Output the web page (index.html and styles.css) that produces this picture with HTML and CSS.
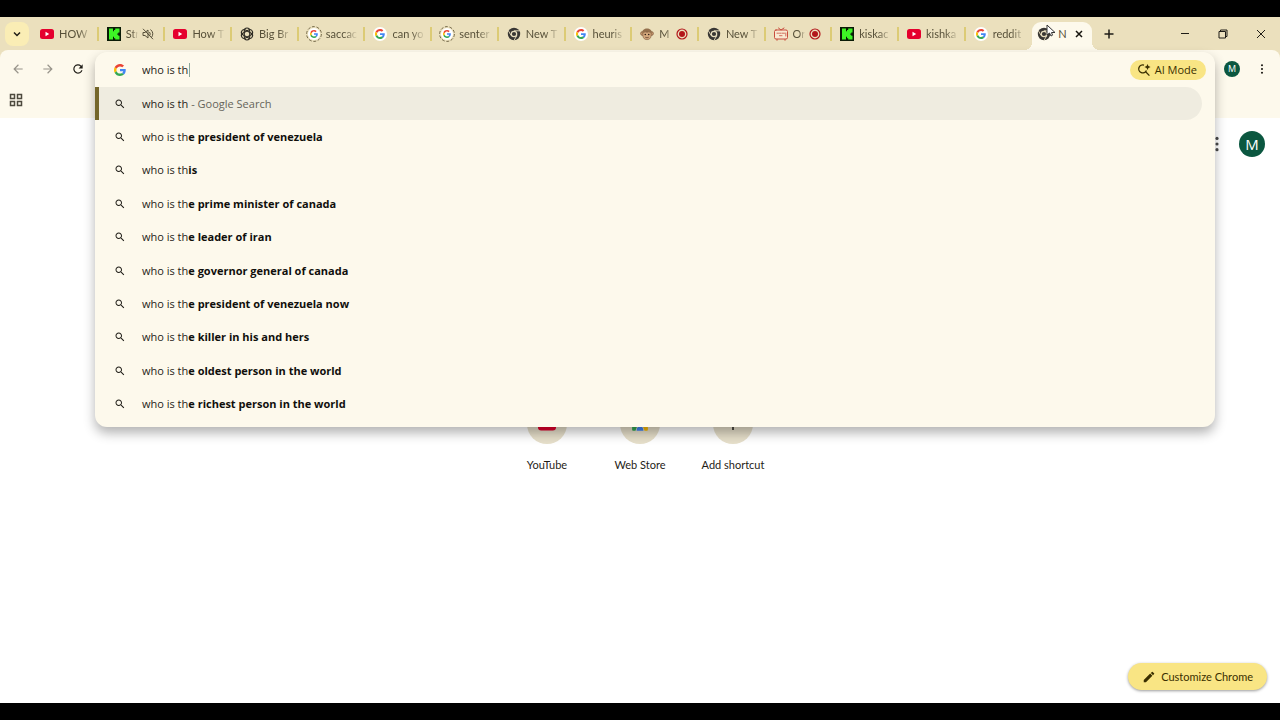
FILE: index.html
```html
<!DOCTYPE html>
<html lang="en">

<head>
    <meta charset="UTF-8">
    <meta name="viewport" content="width=device-width, initial-scale=1.0">
    <title>New Tab</title>
    <link rel="stylesheet" href="styles.css">
</head>

<body>
    <!-- shared icons -->
    <svg class="sprite" aria-hidden="true">
        <symbol id="google" viewBox="0 0 48 48">
            <path fill="#ea4335" d="M24 9.5c3.54 0 6.71 1.22 9.21 3.6l6.85-6.85C35.9 2.38 30.47 0 24 0 14.62 0 6.51 5.38 2.56 13.22l7.98 6.19C12.43 13.72 17.74 9.5 24 9.5z" />
            <path fill="#4285f4" d="M46.98 24.55c0-1.57-.15-3.09-.38-4.55H24v9.02h12.94c-.58 2.96-2.26 5.48-4.78 7.18l7.73 6c4.51-4.18 7.09-10.36 7.09-17.65z" />
            <path fill="#fbbc05" d="M10.53 28.59c-.48-1.45-.76-2.99-.76-4.59s.27-3.14.76-4.59l-7.98-6.19C.92 16.46 0 20.12 0 24c0 3.88.92 7.54 2.56 10.78l7.97-6.19z" />
            <path fill="#34a853" d="M24 48c6.48 0 11.93-2.13 15.89-5.81l-7.73-6c-2.15 1.45-4.92 2.3-8.16 2.3-6.26 0-11.57-4.22-13.47-9.91l-7.98 6.19C6.51 42.62 14.62 48 24 48z" />
        </symbol>
        <symbol id="google-tab" viewBox="0 0 16 16">
            <circle cx="8" cy="8" r="7" fill="#fff" />
            <use href="#google" x="3" y="3" width="10" height="10" />
        </symbol>
        <symbol id="google-loading" viewBox="0 0 16 16">
            <circle cx="8" cy="8" r="6" fill="#fff" />
            <circle cx="8" cy="8" r="7.4" fill="none" stroke="#766b4b" stroke-width="1" stroke-dasharray="3 1.65" />
            <use href="#google" x="4" y="4" width="8" height="8" />
        </symbol>
        <symbol id="youtube" viewBox="0 0 16 16">
            <rect x="1" y="3" width="14" height="10" rx="2.5" fill="#e5002d" />
            <path fill="#fff" d="M6.5 5.8v4.4L10.2 8z" />
        </symbol>
        <symbol id="kick" viewBox="0 0 16 16">
            <rect x="1" y="1" width="14" height="14" fill="#0a1a06" />
            <path fill="#3df525" d="M3 2.500h4v2.800h1V4h1.200V2.500H13.500v4h-1.200v1h-1v1.200h1v1H13.500v3.800H9.200v-1.300H8v-1.400H7v2.700H3z" />
        </symbol>
        <symbol id="chrome" viewBox="0 0 16 16">
            <circle cx="8" cy="8" r="6.2" fill="#393734" />
            <path fill="none" stroke="#e9dfc0" stroke-width=".9" d="M8 4.800h5.600M5.200 9.600L2.400 4.800M10.800 9.600L8 14.400" />
            <circle cx="8" cy="8" r="2.700" fill="#393734" stroke="#e9dfc0" stroke-width="1.200" />
        </symbol>
        <symbol id="openai" viewBox="0 0 16 16">
            <g fill="none" stroke="#2e2b23" stroke-width="1.100">
                <rect x="5.300" y="2" width="5.400" height="12" rx="2.700" />
                <rect x="5.300" y="2" width="5.400" height="12" rx="2.700" transform="rotate(60 8 8)" />
                <rect x="5.300" y="2" width="5.400" height="12" rx="2.700" transform="rotate(120 8 8)" />
            </g>
        </symbol>
        <symbol id="monkey" viewBox="0 0 16 16">
            <circle cx="3.500" cy="7.500" r="1.900" fill="#c89a70" stroke="#7c573b" stroke-width=".7" />
            <circle cx="12.500" cy="7.500" r="1.900" fill="#c89a70" stroke="#7c573b" stroke-width=".7" />
            <path fill="#94704d" d="M3.200 7.500C3 4 5.300 2.600 8 2.600S13 4 12.800 7.500z" />
            <path fill="#d5aa7e" stroke="#7c573b" stroke-width=".6" d="M4 7.300c1-1.700 3-1.800 4-.8 1-1 3-.9 4 .8.700 4-1 6.300-4 6.300s-4.700-2.300-4-6.300z" />
            <circle cx="6.300" cy="8.500" r=".8" fill="#322219" />
            <circle cx="9.700" cy="8.500" r=".8" fill="#322219" />
            <path fill="none" stroke="#62402e" stroke-width=".8" d="M6.300 11.300q1.700 1 3.400 0" />
        </symbol>
        <symbol id="tv" viewBox="0 0 16 16">
            <g fill="none" stroke="#c84b3c" stroke-linecap="round">
                <rect x="1.500" y="4" width="13" height="9" rx="1.500" fill="#f8e9d2" />
                <path d="M5.500 2L8 4l3-2M4 13.500v.8M12 13.500v.8" />
                <path stroke-width=".8" d="M4 7.200h1.500M6.500 7.200h1.200M8.800 7.200h2.700M6.500 9.700h2.500M12.800 7v3" />
            </g>
        </symbol>
        <symbol id="recording" viewBox="0 0 12 12">
            <circle cx="6" cy="6" r="5" fill="none" stroke="#b3161b" stroke-width="1.200" />
            <circle cx="6" cy="6" r="3" fill="#b3161b" />
        </symbol>
        <symbol id="search" viewBox="0 0 24 24">
            <path d="M15.500 14h-.79l-.28-.27C15.410 12.590 16 11.110 16 9.500 16 5.910 13.090 3 9.500 3S3 5.910 3 9.500 5.910 16 9.500 16c1.610 0 3.090-.59 4.230-1.570l.27.28v.79l5 4.990L20.490 19l-4.990-5zm-6 0C7.010 14 5 11.990 5 9.500S7.010 5 9.500 5 14 7.010 14 9.500 11.990 14 9.500 14z" />
        </symbol>
        <symbol id="arrow" viewBox="0 0 24 24">
            <path d="M20 11H7.830l5.590-5.590L12 4l-8 8 8 8 1.410-1.410L7.830 13H20v-2z" />
        </symbol>
        <symbol id="dots" viewBox="0 0 16 16">
            <circle cx="8" cy="3" r="1.400" />
            <circle cx="8" cy="8" r="1.400" />
            <circle cx="8" cy="13" r="1.400" />
        </symbol>
    </svg>

    <header class="tab-strip">
        <button class="tab-search" aria-label="Search tabs">
            <svg class="icon-sm line" viewBox="0 0 12 12"><path d="M3 4.500l3 3 3-3" /></svg>
        </button>
        <nav class="tabs" aria-label="Tabs">
            <a class="tab" href="#"><svg class="favicon"><use href="#youtube" /></svg><span class="tab-title">HOW</span></a>
            <a class="tab" href="#"><svg class="favicon"><use href="#kick" /></svg><span class="tab-title short">Str</span>
                <svg class="icon-sm line status" viewBox="0 0 12 12"><path d="M1 4.500h2l3-2.500v8L3 7.500H1zM7.500 4q1.500 2 0 4M8.500 1.500q4 3.500 1 8M1 .8l10 10.400" /></svg></a>
            <a class="tab" href="#"><svg class="favicon"><use href="#youtube" /></svg><span class="tab-title">How T</span></a>
            <a class="tab" href="#"><svg class="favicon"><use href="#openai" /></svg><span class="tab-title">Big Br</span></a>
            <a class="tab" href="#"><svg class="favicon"><use href="#google-loading" /></svg><span class="tab-title">saccac</span></a>
            <a class="tab" href="#"><svg class="favicon"><use href="#google-tab" /></svg><span class="tab-title">can yo</span></a>
            <a class="tab" href="#"><svg class="favicon"><use href="#google-loading" /></svg><span class="tab-title">senter</span></a>
            <a class="tab" href="#"><svg class="favicon"><use href="#chrome" /></svg><span class="tab-title">New T</span></a>
            <a class="tab" href="#"><svg class="favicon"><use href="#google-tab" /></svg><span class="tab-title">heuris</span></a>
            <a class="tab" href="#"><svg class="favicon"><use href="#monkey" /></svg><span class="tab-title short">M</span><svg class="icon-sm status"><use href="#recording" /></svg></a>
            <a class="tab" href="#"><svg class="favicon"><use href="#chrome" /></svg><span class="tab-title">New T</span></a>
            <a class="tab" href="#"><svg class="favicon"><use href="#tv" /></svg><span class="tab-title short">Or</span><svg class="icon-sm status"><use href="#recording" /></svg></a>
            <a class="tab" href="#"><svg class="favicon"><use href="#kick" /></svg><span class="tab-title">kiskac</span></a>
            <a class="tab" href="#"><svg class="favicon"><use href="#youtube" /></svg><span class="tab-title">kishka</span></a>
            <a class="tab" href="#"><svg class="favicon"><use href="#google-tab" /></svg><span class="tab-title">reddit</span></a>
            <div class="tab active">
                <svg class="favicon"><use href="#chrome" /></svg><span class="tab-title">N</span>
                <button class="tab-close" aria-label="Close tab"><svg class="icon-sm line" viewBox="0 0 12 12"><path d="M3 3l6 6M9 3l-6 6" /></svg></button>
                <svg class="pointer" viewBox="0 0 12 16"><path d="M1 1v10l2.500-2L5 12l1.500-.8L5.500 8.500H9z" /></svg>
            </div>
        </nav>
        <button class="new-tab" aria-label="New tab"><svg class="icon-sm line" viewBox="0 0 12 12"><path d="M6 1.500v9M1.500 6h9" /></svg></button>
        <div class="window-controls">
            <button aria-label="Minimize"><svg class="icon-sm thin" viewBox="0 0 12 12"><path d="M2 5.500h8" /></svg></button>
            <button aria-label="Restore"><svg class="icon-sm thin" viewBox="0 0 12 12"><path d="M2 3.500h6.500V10H2zM3.500 3.500V2H10v6.500H8.500" /></svg></button>
            <button aria-label="Close"><svg class="icon-sm thin" viewBox="0 0 12 12"><path d="M2 2l8 8M10 2l-8 8" /></svg></button>
        </div>
    </header>

    <div class="chrome-bar">
        <div class="toolbar">
            <button class="tool disabled" aria-label="Back"><svg class="icon-md"><use href="#arrow" /></svg></button>
            <button class="tool disabled" aria-label="Forward"><svg class="icon-md flip"><use href="#arrow" /></svg></button>
            <button class="tool" aria-label="Reload"><svg class="icon-md" viewBox="0 0 24 24"><path d="M17.650 6.350A8 8 0 1 0 19.730 14h-2.080A6 6 0 1 1 12 6c1.660 0 3.140.69 4.220 1.780L13 11h7V4z" /></svg></button>

            <form class="omnibox">
                <div class="omnibox-row">
                    <svg class="icon-sm"><use href="#google" /></svg>
                    <div class="query">
                        <input type="text" value="who is th" aria-label="Search Google or type a URL">
                        <span class="caret"></span>
                    </div>
                    <button type="button" class="ai-mode">
                        <svg class="icon-md" viewBox="0 0 16 16"><path class="ai-ring" d="M8 2.300A4.600 4.600 0 1 0 10.800 8.500M9.600 9.800l4.600 4.600" /><path d="M12 1q.4 3 3.500 3.500Q12.400 5 12 8q-.4-3-3.500-3.500Q11.600 4 12 1z" /></svg>
                        AI Mode
                    </button>
                </div>
                <ul class="suggestions">
                    <li><a class="selected" href="#"><svg class="icon-sm"><use href="#search" /></svg><span>who is th <span class="hint">- Google Search</span></span></a></li>
                    <li><a href="#"><svg class="icon-sm"><use href="#search" /></svg><span>who is th<b>e president of venezuela</b></span></a></li>
                    <li><a href="#"><svg class="icon-sm"><use href="#search" /></svg><span>who is th<b>is</b></span></a></li>
                    <li><a href="#"><svg class="icon-sm"><use href="#search" /></svg><span>who is th<b>e prime minister of canada</b></span></a></li>
                    <li><a href="#"><svg class="icon-sm"><use href="#search" /></svg><span>who is th<b>e leader of iran</b></span></a></li>
                    <li><a href="#"><svg class="icon-sm"><use href="#search" /></svg><span>who is th<b>e governor general of canada</b></span></a></li>
                    <li><a href="#"><svg class="icon-sm"><use href="#search" /></svg><span>who is th<b>e president of venezuela now</b></span></a></li>
                    <li><a href="#"><svg class="icon-sm"><use href="#search" /></svg><span>who is th<b>e killer in his and hers</b></span></a></li>
                    <li><a href="#"><svg class="icon-sm"><use href="#search" /></svg><span>who is th<b>e oldest person in the world</b></span></a></li>
                    <li><a href="#"><svg class="icon-sm"><use href="#search" /></svg><span>who is th<b>e richest person in the world</b></span></a></li>
                </ul>
            </form>

            <div class="toolbar-end">
                <button class="avatar" aria-label="Profile">M</button>
                <button class="tool" aria-label="Menu"><svg class="icon-sm"><use href="#dots" /></svg></button>
            </div>
        </div>
        <div class="bookmarks">
            <button class="tool" aria-label="Tab groups"><svg class="icon-md line" viewBox="0 0 14 14"><path d="M1.500 1.500h4v4h-4zM8.500 1.500h4v4h-4zM1.500 8.500h4v4h-4zM8.500 8.500h4v4h-4z" /></svg></button>
        </div>
    </div>

    <main class="page">
        <div class="page-top">
            <button class="tool" aria-label="Google apps"><svg class="icon-lg"><use href="#dots" /></svg></button>
            <button class="avatar large" aria-label="Google Account">M</button>
        </div>
        <nav class="shortcuts" aria-label="Shortcuts">
            <a class="shortcut" href="#">
                <span class="disc"><svg class="icon-lg" viewBox="1 1 14 14"><use href="#youtube" width="16" height="16" /></svg></span>
                YouTube
            </a>
            <a class="shortcut" href="#">
                <span class="disc"><svg class="icon-lg" viewBox="0 0 16 16"><path fill="#ea4335" d="M1 2h14v5H1z" /><path fill="#34a853" d="M1 7h5.500L4 14H2q-1 0-1-1z" /><path fill="#4285f4" d="M5 14q0-4 3-4t3 4z" /><path fill="#fbbc05" d="M9.500 7H15v6q0 1-1 1h-2z" /></svg></span>
                Web Store
            </a>
            <a class="shortcut" href="#">
                <span class="disc"><svg class="icon-md line" viewBox="0 0 14 14"><path d="M7 1v12M1 7h12" /></svg></span>
                Add shortcut
            </a>
        </nav>
        <button class="customize">
            <svg class="icon-md" viewBox="0 0 24 24"><path d="M3 17.250V21h3.750L17.810 9.940l-3.750-3.750L3 17.250zM20.710 7.040a1 1 0 0 0 0-1.410l-2.340-2.340a1 1 0 0 0-1.410 0l-1.830 1.830 3.750 3.750 1.830-1.830z" /></svg>
            Customize Chrome
        </button>
    </main>
</body>

</html>
```
FILE: styles.css
```css
* {
    box-sizing: border-box;
    margin: 0;
    padding: 0;
}

body {
    display: flex;
    flex-direction: column;
    min-height: 100vh;
    padding: 17px 0;
    background-color: #000;
    color: #1f1d17;
    font-family: "Open Sans", "Noto Sans", sans-serif;
    font-size: 11px;
    line-height: 16px;
}

button,
input {
    border: 0;
    background: none;
    color: inherit;
    font: inherit;
}

button {
    display: flex;
    align-items: center;
    justify-content: center;
    flex-shrink: 0;
}

a {
    color: inherit;
    text-decoration: none;
}

svg {
    display: block;
    flex-shrink: 0;
    fill: currentColor;
}

.sprite {
    position: absolute;
    width: 0;
    height: 0;
}

.icon-sm {
    width: 12px;
    height: 12px;
}

.icon-md {
    width: 14px;
    height: 14px;
}

.icon-lg {
    width: 18px;
    height: 18px;
}

.line,
.thin {
    fill: none;
    stroke: currentColor;
    stroke-width: 1.5;
}

.thin {
    stroke-width: 1;
}

.flip {
    transform: scaleX(-1);
}

/* tab strip */
.tab-strip {
    display: flex;
    align-items: center;
    height: 33px;
    background-color: #ebe0bd;
}

.tab-search {
    width: 24px;
    height: 24px;
    margin: 0 1px 0 5px;
    border-radius: 8px;
    background-color: #faedb5;
}

.tabs {
    display: grid;
    grid-auto-flow: column;
    grid-auto-columns: minmax(0, 1fr);
    flex: 1;
    align-self: stretch;
    min-width: 0;
}

.tab {
    display: flex;
    align-items: center;
    gap: 4px;
    min-width: 0;
    padding: 0 5px 0 9px;
    color: #575039;
    font-family: Lato, "Open Sans", sans-serif;
}

.tab + .tab:not(.active) {
    background: linear-gradient(#dccb75, #dccb75) left center / 2px 14px no-repeat;
}

.favicon {
    width: 16px;
    height: 16px;
}

.tab-title {
    flex: 1;
    min-width: 0;
    white-space: nowrap;
    mask-image: linear-gradient(to right, #000 calc(100% - 14px), transparent);
}

.tab-title.short {
    mask-image: linear-gradient(to right, #000 calc(100% - 6px), transparent);
}

.status {
    margin-right: 4px;
    stroke-width: 1;
}

.tab.active {
    position: relative;
    align-self: end;
    height: 28px;
    gap: 2px;
    margin: 0 5px 0 2px;
    padding: 0 7px 4px 4px;
    border-radius: 9px 9px 0 0;
    background-color: #fdf9ec;
}

.tab.active .tab-title {
    padding-left: 4px;
    mask-image: none;
}

.tab.active::before,
.tab.active::after {
    content: "";
    position: absolute;
    bottom: 0;
    width: 8px;
    height: 8px;
}

.tab.active::before {
    right: 100%;
    background: radial-gradient(circle at 0 0, transparent 8px, #fdf9ec 8px);
}

.tab.active::after {
    left: 100%;
    background: radial-gradient(circle at 100% 0, transparent 8px, #fdf9ec 8px);
}

.tab-close {
    color: #17150f;
}

.pointer {
    position: absolute;
    top: 2px;
    left: 14px;
    width: 12px;
    height: 16px;
    fill: #fff;
    stroke: #333;
}

.new-tab {
    width: 24px;
    height: 24px;
    margin-right: 45px;
}

.window-controls {
    display: flex;
}

.window-controls button {
    width: 38px;
    height: 32px;
}

/* toolbar and address box */
.chrome-bar {
    background: linear-gradient(#fdf9ec, #fdf9ec) 0 8px no-repeat, #ebe0bd;
}

.toolbar {
    position: relative;
    display: flex;
    align-items: center;
    height: 38px;
    padding: 0 3px;
    border-radius: 8px 8px 0 0;
    background-color: #fdf9ec;
}

.tool {
    width: 30px;
    height: 30px;
}

.tool.disabled {
    color: #98948a;
}

.toolbar-end {
    display: flex;
    align-items: center;
    gap: 7px;
    margin-left: auto;
}

.avatar {
    width: 16px;
    height: 16px;
    border-radius: 50%;
    background-color: #0b5740;
    color: #fff;
    font-size: 9px;
}

.avatar.large {
    width: 26px;
    height: 26px;
    font-size: 15px;
}

.bookmarks {
    height: 30px;
    padding-left: 1px;
}

.bookmarks .tool {
    height: 24px;
    color: #4d4a3e;
}

.omnibox {
    position: absolute;
    top: 2px;
    left: 95px;
    right: 65px;
    z-index: 1;
    padding-bottom: 6px;
    border-radius: 12px;
    background-color: #fdf9ec;
    box-shadow: 0 6px 12px rgba(0, 0, 0, 0.3);
}

.omnibox-row {
    display: flex;
    align-items: center;
    gap: 16px;
    height: 35px;
    padding: 0 9px 0 19px;
}

.query {
    position: relative;
    flex: 1;
}

.query input {
    display: block;
    width: 100%;
    outline: none;
}

.caret {
    position: absolute;
    top: 1px;
    left: 47px;
    width: 1px;
    height: 14px;
    background-color: #8aa79a;
}

.ai-mode {
    gap: 4px;
    height: 20px;
    padding: 0 9px 0 7px;
    border-radius: 10px;
    background-color: #f9e584;
    color: #3a2f00;
    font-weight: 500;
}

.ai-ring {
    fill: none;
    stroke: currentColor;
    stroke-width: 1.5;
}

.suggestions {
    display: grid;
    grid-auto-rows: 1fr;
    height: 334px;
    list-style: none;
}

.suggestions a {
    display: flex;
    align-items: center;
    gap: 16px;
    height: 100%;
    margin-right: 13px;
    padding-left: 19px;
}

.suggestions .selected {
    border-radius: 0 17px 17px 0;
    background-color: #efece0;
    box-shadow: inset 4px 0 #74662a;
}

.suggestions b {
    color: #100f0b;
    font-weight: 700;
}

.hint {
    color: #66645b;
}

/* new tab page */
.page {
    display: flex;
    flex: 1;
    flex-direction: column;
    padding: 13px;
    background-color: #fff;
}

.page-top {
    display: flex;
    align-items: center;
    justify-content: flex-end;
    gap: 7px;
    height: 26px;
    padding-right: 2px;
    color: #4a4a4a;
}

.shortcuts {
    display: flex;
    justify-content: center;
    margin-top: 247px;
}

.shortcut {
    display: flex;
    flex-direction: column;
    align-items: center;
    gap: 13px;
    width: 93px;
    font-family: Lato, "Open Sans", sans-serif;
}

.disc {
    display: flex;
    align-items: center;
    justify-content: center;
    width: 40px;
    height: 40px;
    border-radius: 50%;
    background-color: #e6dfca;
}

.customize {
    align-self: flex-end;
    gap: 5px;
    height: 27px;
    margin-top: auto;
    padding: 0 14px;
    border-radius: 14px;
    background-color: #f9e584;
    box-shadow: 0 1px 3px rgba(0, 0, 0, 0.4);
    color: #3a2f00;
    font-family: Lato, "Open Sans", sans-serif;
}
```
